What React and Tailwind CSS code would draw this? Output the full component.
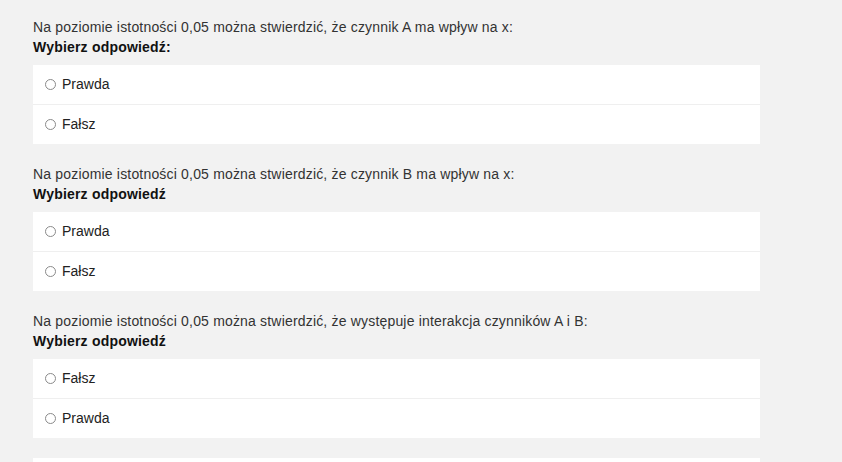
const questions = [
  {
    text: "Na poziomie istotności 0,05 można stwierdzić, że czynnik A ma wpływ na x:",
    label: "Wybierz odpowiedź:",
    options: ["Prawda", "Fałsz"],
  },
  {
    text: "Na poziomie istotności 0,05 można stwierdzić, że czynnik B ma wpływ na x:",
    label: "Wybierz odpowiedź",
    options: ["Prawda", "Fałsz"],
  },
  {
    text: "Na poziomie istotności 0,05 można stwierdzić, że występuje interakcja czynników A i B:",
    label: "Wybierz odpowiedź",
    options: ["Fałsz", "Prawda"],
  },
];

const Question = ({ q }) => (
  <div className="mb-[20px]">
    {/* Question text */}
    <p className="leading-[20px] tracking-[0.18px] text-[#333]">{q.text}</p>
    <p className="leading-[20px] font-bold tracking-[0.2px] text-[#111]">{q.label}</p>

    {/* Options card */}
    <div className="mt-[8px] w-[727px] bg-white">
      {q.options.map((opt, i) => (
        <label
          key={opt}
          className={
            "flex h-[39px] items-center gap-[6px] pl-[12px] text-[#222] " +
            (i > 0 ? "border-t border-[#efefef] h-[40px]" : "")
          }
        >
          <span className="h-[11px] w-[11px] rounded-full border border-[#8a8a8a] bg-white" />
          <span>{opt}</span>
        </label>
      ))}
    </div>
  </div>
);

const App = () => {
  return (
    <div
      className="min-h-[462px] bg-[#f2f2f2] px-[33px] pt-[17px] text-[14px]"
      style={{ fontFamily: '"Liberation Sans", Arial, sans-serif' }}
    >
      {questions.map((q, i) => (
        <Question key={i} q={q} />
      ))}
      {/* Next card peeking in */}
      <div className="h-[40px] w-[727px] bg-white" />
    </div>
  );
};

export default App;
